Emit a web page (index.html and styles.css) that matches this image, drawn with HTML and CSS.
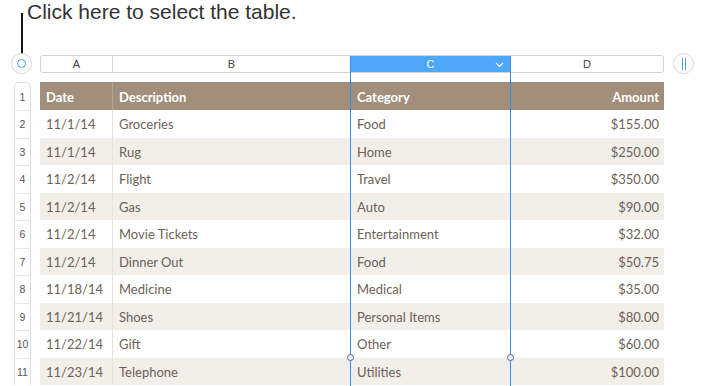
FILE: index.html
```html
<!DOCTYPE html>
<html>
<head>
<meta charset="utf-8">
<link rel="stylesheet" href="styles.css">
</head>
<body>
<div class="page">
  <div class="callout">
    <span class="leader"></span>
    <span class="callout-text">Click here to select the table.</span>
  </div>

  <div class="sheet">
    <div class="topbar">
      <div class="round-btn select-btn"><span class="ring"></span></div>
      <div class="colbar">
        <div class="colhead ca">A</div>
        <div class="colhead cb">B</div>
        <div class="colhead cc selected">C
          <svg class="chev" width="9" height="6" viewBox="0 0 9 6"><path d="M1 1 L4.5 4.5 L8 1" fill="none" stroke="#fff" stroke-width="1.2"/></svg>
        </div>
        <div class="colhead cd">D</div>
      </div>
      <div class="round-btn pause-btn"><span class="bars"></span></div>
    </div>

    <div class="main">
      <div class="rownums">
        <div class="rn rn-head">1</div>
        <div class="rn">2</div>
        <div class="rn">3</div>
        <div class="rn">4</div>
        <div class="rn">5</div>
        <div class="rn">6</div>
        <div class="rn">7</div>
        <div class="rn">8</div>
        <div class="rn">9</div>
        <div class="rn">10</div>
        <div class="rn">11</div>
      </div>

      <div class="tbl">
        <div class="row head">
          <div class="cell">Date</div>
          <div class="cell">Description</div>
          <div class="cell">Category</div>
          <div class="cell num">Amount</div>
        </div>
        <div class="row">
          <div class="cell">11/1/14</div><div class="cell">Groceries</div><div class="cell">Food</div><div class="cell num">$155.00</div>
        </div>
        <div class="row alt">
          <div class="cell">11/1/14</div><div class="cell">Rug</div><div class="cell">Home</div><div class="cell num">$250.00</div>
        </div>
        <div class="row">
          <div class="cell">11/2/14</div><div class="cell">Flight</div><div class="cell">Travel</div><div class="cell num">$350.00</div>
        </div>
        <div class="row alt">
          <div class="cell">11/2/14</div><div class="cell">Gas</div><div class="cell">Auto</div><div class="cell num">$90.00</div>
        </div>
        <div class="row">
          <div class="cell">11/2/14</div><div class="cell">Movie Tickets</div><div class="cell">Entertainment</div><div class="cell num">$32.00</div>
        </div>
        <div class="row alt">
          <div class="cell">11/2/14</div><div class="cell">Dinner Out</div><div class="cell">Food</div><div class="cell num">$50.75</div>
        </div>
        <div class="row">
          <div class="cell">11/18/14</div><div class="cell">Medicine</div><div class="cell">Medical</div><div class="cell num">$35.00</div>
        </div>
        <div class="row alt">
          <div class="cell">11/21/14</div><div class="cell">Shoes</div><div class="cell">Personal Items</div><div class="cell num">$80.00</div>
        </div>
        <div class="row">
          <div class="cell">11/22/14</div><div class="cell">Gift</div><div class="cell">Other</div><div class="cell num">$60.00</div>
        </div>
        <div class="row alt">
          <div class="cell">11/23/14</div><div class="cell">Telephone</div><div class="cell">Utilities</div><div class="cell num">$100.00</div>
        </div>
      </div>
    </div>

    <div class="col-select">
      <span class="handle hl"></span>
      <span class="handle hr"></span>
    </div>
  </div>
</div>
</body>
</html>
```

FILE: styles.css
```css
* { box-sizing: border-box; }
html, body { margin: 0; padding: 0; background: #fff; }
body { width: 702px; height: 386px; overflow: hidden; }

.page { position: relative; }

.callout {
  position: relative;
  height: 53px;
  padding: 0 0 0 27px;
}
.callout-text {
  font-family: "Liberation Sans", Arial, sans-serif;
  font-size: 21px;
  line-height: 24px;
  color: #333;
}
.leader {
  position: absolute;
  left: 21px;
  top: 13px;
  width: 1.5px;
  height: 41px;
  background: #111;
}

.sheet { position: relative; }

.topbar {
  display: flex;
  align-items: flex-start;
  padding-left: 11px;
  height: 21px;
}
.round-btn {
  width: 21px;
  height: 21px;
  border-radius: 50%;
  border: 1px solid #d6d6d6;
  background: #fff;
  display: flex;
  align-items: center;
  justify-content: center;
  flex: none;
}
.ring {
  width: 9px;
  height: 9px;
  border-radius: 50%;
  border: 1.3px solid #4a9ff0;
}
.bars {
  width: 4px;
  height: 12px;
  border-left: 1px solid #4a9ff0;
  border-right: 1px solid #4a9ff0;
}

.colbar {
  margin: 2px 9px 0 8px;
  width: 624px;
  height: 18px;
  border: 1px solid #d2d2d2;
  border-radius: 3px;
  display: flex;
  font-family: "Liberation Sans", Arial, sans-serif;
  font-size: 11px;
  color: #444;
  flex: none;
}
.colhead {
  display: flex;
  align-items: center;
  justify-content: center;
  border-left: 1px solid #dcdcdc;
  height: 16px;
  position: relative;
}
.colhead.ca { width: 71px; border-left: none; }
.colhead.cb { width: 238px; }
.colhead.cc { width: 160px; }
.colhead.cd { flex: 1; }
.colhead.selected {
  background: #4ea8f7;
  color: #fff;
  border-left-color: #3d8fe6;
}
.chev { position: absolute; right: 6px; top: 6px; }

.main {
  display: flex;
  gap: 9px;
  padding-left: 14px;
  margin-top: 8px;
}
.rownums {
  width: 17px;
  border: 1px solid #dedede;
  border-bottom: none;
  border-radius: 5px 5px 0 0;
  font-family: "Liberation Sans", Arial, sans-serif;
  font-size: 10.5px;
  color: #555;
  flex: none;
}
.rn {
  height: 27.5px;
  display: flex;
  align-items: center;
  justify-content: center;
  border-top: 1px solid #e6e6e6;
}
.rn-head { height: 27px; border-top: none; }

.tbl {
  width: 624px;
  display: flex;
  flex-direction: column;
  font-family: Lato, "Open Sans", sans-serif;
  font-size: 13px;
  color: #6c6259;
  flex: none;
}
.row {
  display: grid;
  grid-template-columns: 72px 238px 160px 154px;
  height: 27.5px;
  background: #fff;
}
.row.alt { background: #f2eeea; }
.row.head {
  height: 28px;
  background: #a18e7b;
  color: #fff;
  font-weight: 700;
}
.cell {
  display: flex;
  align-items: center;
  padding: 1px 6px 0 6px;
  border-left: 1px solid #e8e2dc;
  white-space: nowrap;
}
.cell:first-child { border-left: none; }
.row.head .cell { border-left-color: #b3a493; }
.cell.num { justify-content: flex-end; padding-right: 5px; }

.col-select {
  position: absolute;
  left: 350px;
  top: 3px;
  width: 161px;
  height: 340px;
  border-left: 1px solid #3d8fe6;
  border-right: 1px solid #3d8fe6;
  pointer-events: none;
}
.handle {
  position: absolute;
  top: 298px;
  width: 7px;
  height: 7px;
  border-radius: 50%;
  background: #fff;
  border: 1.3px solid #3b6cc4;
}
.handle.hl { left: -4px; }
.handle.hr { right: -4px; }
```
